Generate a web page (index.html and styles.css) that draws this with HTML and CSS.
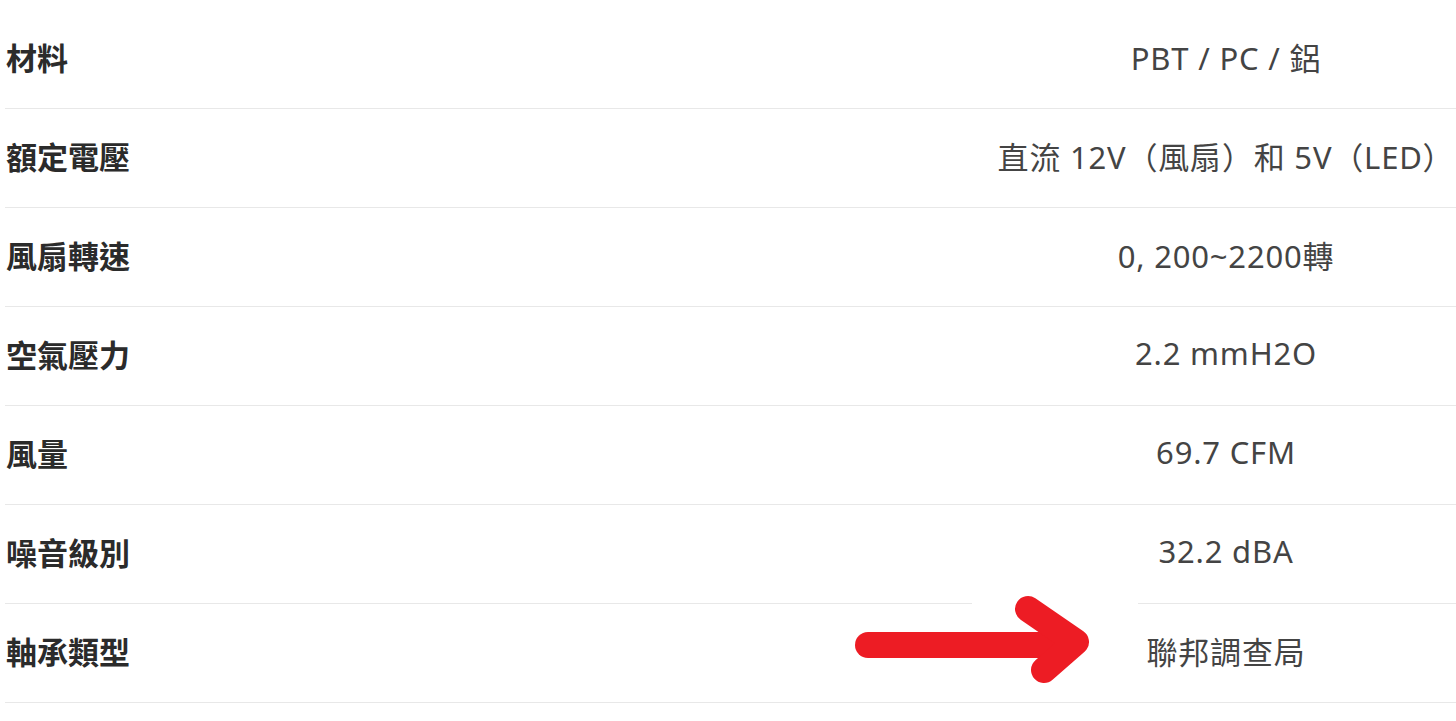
FILE: index.html
```html
<!DOCTYPE html>
<html lang="zh-Hant">
<head>
    <meta charset="UTF-8">
    <meta name="viewport" content="width=device-width, initial-scale=1.0">
    <title>規格</title>
    <link rel="stylesheet" href="styles.css">
</head>
<body>

    <div class="specs">
        <!-- Spec rows -->
        <div class="row">
            <div class="label">材料</div>
            <div class="value">PBT / PC / 鋁</div>
        </div>
        <div class="row">
            <div class="label">額定電壓</div>
            <div class="value">直流 12V（風扇）和 5V（LED）</div>
        </div>
        <div class="row">
            <div class="label">風扇轉速</div>
            <div class="value">0, 200~2200轉</div>
        </div>
        <div class="row">
            <div class="label">空氣壓力</div>
            <div class="value">2.2 mmH2O</div>
        </div>
        <div class="row">
            <div class="label">風量</div>
            <div class="value">69.7 CFM</div>
        </div>
        <div class="row">
            <div class="label">噪音級別</div>
            <div class="value">32.2 dBA</div>
        </div>
        <div class="row">
            <div class="label">軸承類型</div>
            <div class="value">聯邦調查局</div>
        </div>

        <!-- Hand-drawn arrow pasted on the screenshot -->
        <svg class="arrow" width="300" height="110" viewBox="850 590 300 110">
            <rect x="972" y="594" width="166" height="14" fill="#fff"/>
            <line x1="868" y1="645" x2="1070" y2="645" stroke="#ed1c24" stroke-width="26" stroke-linecap="round"/>
            <polyline points="1028,609 1076,642 1044,670" fill="none" stroke="#ed1c24" stroke-width="26" stroke-linecap="round" stroke-linejoin="round"/>
        </svg>
    </div>

</body>
</html>
```

FILE: styles.css
```css
body {
    margin: 0;
    background-color: #fff;
    font-family: "Noto Sans", "Noto Sans CJK TC", sans-serif;
}

.specs {
    position: relative;
    padding: 10px 0 0 5px;
}

.specs .row {
    display: grid;
    grid-template-columns: 1fr 460px;
    align-items: center;
    box-sizing: border-box;
    height: 99px;
    padding-bottom: 6px;
    border-bottom: 1px solid #e8e8e8;
}

.specs .label {
    padding-left: 1px;
    font-family: "Noto Sans CJK TC", sans-serif;
    font-weight: 700;
    font-size: 31px;
    color: #2b2b2b;
}

.specs .value {
    text-align: center;
    font-size: 31px;
    letter-spacing: 0.8px;
    color: #444;
    white-space: nowrap;
}

.arrow {
    position: absolute;
    left: 850px;
    top: 590px;
}
```
